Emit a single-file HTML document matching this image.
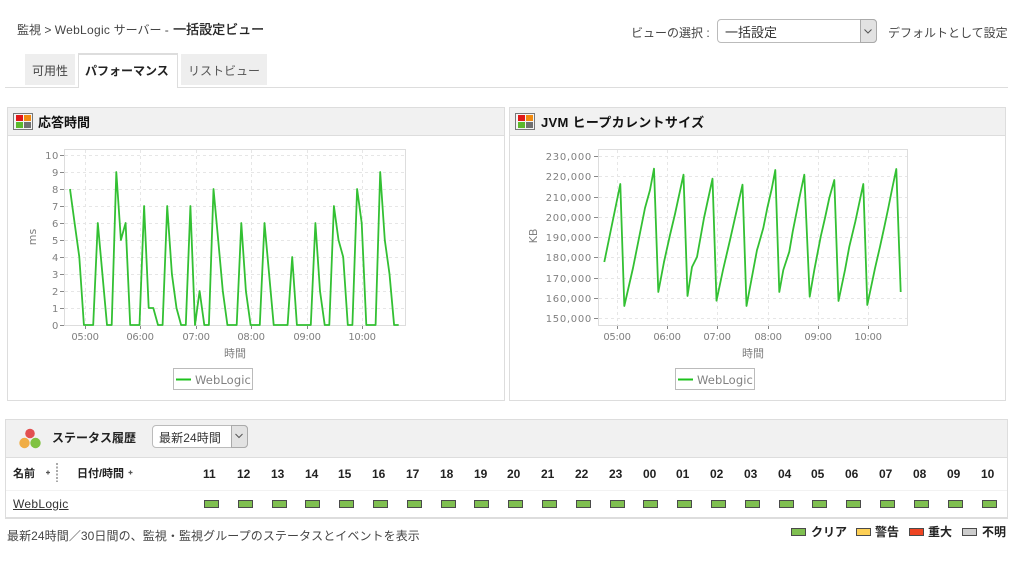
<!DOCTYPE html>
<html lang="ja"><head><meta charset="utf-8"><title>一括設定ビュー</title>
<style>
html,body{margin:0;padding:0;background:#fff}
#p{position:relative;width:1017px;height:567px;overflow:hidden;background:#fff;font:12px "Liberation Sans","Noto Sans CJK JP",sans-serif;color:#333}
.a{position:absolute;white-space:nowrap;line-height:16px}
.b{font-weight:bold;color:#222}
.box{position:absolute;box-sizing:border-box}
svg{position:absolute;left:0;top:0}
svg text{font-family:"DejaVu Sans","Noto Sans CJK JP",sans-serif;fill:#808080}
</style></head><body><div id="p">

<div class="a" style="left:17px;top:22px;color:#444">監視 &gt; <span style="letter-spacing:.3px">WebLogic</span> サーバー - <span style="color:#222;font-size:13px;margin-left:1px;-webkit-text-stroke:.3px #222">一括設定ビュー</span></div>
<div class="a" style="left:631px;top:25px;color:#444">ビューの選択 :</div>
<div class="box" style="left:717px;top:19px;width:160px;height:24px;border:1px solid #bbb;border-radius:4px;background:#fff"></div>
<div class="box" style="left:860px;top:19px;width:17px;height:24px;border:1px solid #aaa;border-radius:0 4px 4px 0;background:#e2e2e2"></div>
<div class="a" style="left:725px;top:25px;font-size:13px;color:#333">一括設定</div>
<div class="a" style="left:888px;top:25px;color:#444">デフォルトとして設定</div>

<div class="box" style="left:5px;top:87px;width:1003px;height:1px;background:#ddd"></div>
<div class="box" style="left:25px;top:54px;width:50px;height:31px;background:#eee"></div>
<div class="a" style="left:32px;top:63px;color:#444">可用性</div>
<div class="box" style="left:78px;top:53px;width:100px;height:35px;background:#fff;border:1px solid #ddd;border-top:2px solid #ddd;border-bottom:0"></div>
<div class="a b" style="left:85px;top:63px;font-size:12px">パフォーマンス</div>
<div class="box" style="left:181px;top:54px;width:86px;height:31px;background:#eee"></div>
<div class="a" style="left:188px;top:63px;font-size:12px;color:#555">リストビュー</div>

<div class="box" style="left:7px;top:107px;width:498px;height:294px;border:1px solid #ddd;background:#fff"></div>
<div class="box" style="left:7px;top:107px;width:498px;height:29px;border:1px solid #ddd;background:#f1f1f1"></div>
<div class="a b" style="left:38px;top:115px;font-size:13px;color:#111">応答時間</div>
<div class="box" style="left:509px;top:107px;width:497px;height:294px;border:1px solid #ddd;background:#fff"></div>
<div class="box" style="left:509px;top:107px;width:497px;height:29px;border:1px solid #ddd;background:#f1f1f1"></div>
<div class="a b" style="left:541px;top:115px;font-size:13px;color:#111;letter-spacing:.3px">JVM ヒープカレントサイズ</div>

<div class="box" style="left:5px;top:419px;width:1003px;height:100px;border:1px solid #ddd;border-bottom:2px solid #ddd;background:#fff"></div>
<div class="box" style="left:5px;top:419px;width:1003px;height:39px;border:1px solid #ddd;background:#f1f1f1"></div>
<div class="box" style="left:6px;top:490px;width:1001px;height:1px;background:#f2f2f2"></div>
<div class="a b" style="left:52px;top:430px;font-size:12px;color:#222">ステータス履歴</div>
<div class="box" style="left:152px;top:425px;width:96px;height:23px;border:1px solid #bbb;border-radius:4px;background:#fff"></div>
<div class="box" style="left:231px;top:425px;width:17px;height:23px;border:1px solid #aaa;border-radius:0 4px 4px 0;background:#e2e2e2"></div>
<div class="a" style="left:159px;top:430px;color:#333;letter-spacing:.1px">最新24時間</div>

<div class="a b" style="left:13px;top:466px;font-size:11px">名前</div>
<div class="a b" style="left:77px;top:466px;font-size:11px">日付/時間</div>
<div class="a" style="left:13px;top:496px;color:#333;text-decoration:underline;letter-spacing:.3px">WebLogic</div>
<div class="a" style="left:7px;top:528px;color:#444;letter-spacing:.08px">最新24時間／30日間の、監視・監視グループのステータスとイベントを表示</div>
<div class="a b" style="left:811px;top:524px">クリア</div>
<div class="a b" style="left:875px;top:524px">警告</div>
<div class="a b" style="left:928px;top:524px">重大</div>
<div class="a b" style="left:982px;top:524px">不明</div>

<div class="a b" style="left:203px;top:466px">11</div>
<div class="a b" style="left:237px;top:466px">12</div>
<div class="a b" style="left:271px;top:466px">13</div>
<div class="a b" style="left:305px;top:466px">14</div>
<div class="a b" style="left:338px;top:466px">15</div>
<div class="a b" style="left:372px;top:466px">16</div>
<div class="a b" style="left:406px;top:466px">17</div>
<div class="a b" style="left:440px;top:466px">18</div>
<div class="a b" style="left:474px;top:466px">19</div>
<div class="a b" style="left:507px;top:466px">20</div>
<div class="a b" style="left:541px;top:466px">21</div>
<div class="a b" style="left:575px;top:466px">22</div>
<div class="a b" style="left:609px;top:466px">23</div>
<div class="a b" style="left:643px;top:466px">00</div>
<div class="a b" style="left:676px;top:466px">01</div>
<div class="a b" style="left:710px;top:466px">02</div>
<div class="a b" style="left:744px;top:466px">03</div>
<div class="a b" style="left:778px;top:466px">04</div>
<div class="a b" style="left:811px;top:466px">05</div>
<div class="a b" style="left:845px;top:466px">06</div>
<div class="a b" style="left:879px;top:466px">07</div>
<div class="a b" style="left:913px;top:466px">08</div>
<div class="a b" style="left:947px;top:466px">09</div>
<div class="a b" style="left:981px;top:466px">10</div>

<svg width="1017" height="567" viewBox="0 0 1017 567">
<!-- select chevrons -->
<path d="M864.5 29.5l3.5 3.5 3.5-3.5" fill="none" stroke="#555" stroke-width="1"/>
<path d="M235.5 434l3.5 3.5 3.5-3.5" fill="none" stroke="#555" stroke-width="1"/>
<!-- panel icons -->
<g><rect x="13.5" y="113.5" width="19" height="16" fill="#f4f4f4" stroke="#777"/><rect x="16" y="115" width="7" height="6" fill="#e01818"/><rect x="24" y="115" width="7" height="6" fill="#f08a10"/><rect x="16" y="122" width="7" height="6" fill="#5cb82c"/><rect x="24" y="122" width="7" height="6" fill="#707070"/></g>
<g transform="translate(502 0)"><rect x="13.5" y="113.5" width="19" height="16" fill="#f4f4f4" stroke="#777"/><rect x="16" y="115" width="7" height="6" fill="#e01818"/><rect x="24" y="115" width="7" height="6" fill="#f08a10"/><rect x="16" y="122" width="7" height="6" fill="#5cb82c"/><rect x="24" y="122" width="7" height="6" fill="#707070"/></g>
<!-- status circles -->
<circle cx="30" cy="433.5" r="4.8" fill="#e25050"/><circle cx="24.5" cy="443" r="5.2" fill="#f0ad45"/><circle cx="35.5" cy="443" r="5.2" fill="#7fc241"/>
<!-- sort marks -->
<path d="M46 472.5h4M48 470.5v4" stroke="#555" stroke-width="1.2"/>
<path d="M128.500 472.500h4M130.500 470.500v4" stroke="#555" stroke-width="1.200"/>
<line x1="57" y1="463" x2="57" y2="482" stroke="#aaa" stroke-width="2" stroke-dasharray="2 1.500"/>

<!-- chart 1 -->
<g stroke="#e6e6e6" stroke-dasharray="3 3" fill="none">
<path d="M65 155.500H405M65 172.500H405M65 189.500H405M65 206.500H405M65 223.500H405M65 240.500H405M65 257.500H405M65 274.500H405M65 291.500H405M65 308.500H405"/>
<path d="M85.500 150V325M140.500 150V325M196.500 150V325M251.500 150V325M307.500 150V325M362.500 150V325"/>
</g>
<rect x="64.500" y="149.500" width="341" height="176" fill="none" stroke="#ddd"/>
<path d="M60 155.500h4M60 172.500h4M60 189.500h4M60 206.500h4M60 223.500h4M60 240.500h4M60 257.500h4M60 274.500h4M60 291.500h4M60 308.500h4M60 325.500h4M85.500 326v3M140.500 326v3M196.500 326v3M251.500 326v3M307.500 326v3M362.500 326v3" stroke="#888" fill="none"/>
<polyline fill="none" stroke="#33c033" stroke-width="1.800" stroke-linejoin="round" points="70,189 74.600,223 79.300,257 83.900,325 88.500,325 93.200,325 97.800,223 102.400,274 107,325 111.700,325 116.300,172 120.900,240 125.600,223 130.200,325 134.800,325 139.500,325 144.100,206 148.700,308 153.300,308 158,325 162.600,325 167.200,206 171.900,274 176.500,308 181.100,325 185.800,325 190.400,206 195,325 199.600,291 204.300,325 208.900,325 213.500,189 218.200,240 222.800,291 227.400,325 232.100,325 236.700,325 241.300,223 245.900,291 250.600,325 255.200,325 259.800,325 264.500,223 269.100,274 273.700,325 278.400,325 283,325 287.600,325 292.200,257 296.900,325 301.500,325 306.100,325 310.800,325 315.400,223 320,291 324.700,325 329.300,325 333.900,206 338.500,240 343.200,257 347.800,325 352.400,325 357.100,189 361.700,223 366.300,325 371,325 375.600,325 380.200,172 384.800,240 389.500,274 394.100,325 398.700,325"/>
<g font-size="10" text-anchor="end" letter-spacing=".6">
<text x="59" y="159">10</text><text x="59" y="176">9</text><text x="59" y="193">8</text><text x="59" y="210">7</text><text x="59" y="227">6</text><text x="59" y="244">5</text><text x="59" y="261">4</text><text x="59" y="278">3</text><text x="59" y="295">2</text><text x="59" y="312">1</text><text x="59" y="329">0</text>
</g>
<g font-size="10" text-anchor="middle" letter-spacing="-.3">
<text x="85" y="340">05:00</text><text x="140" y="340">06:00</text><text x="196" y="340">07:00</text><text x="251" y="340">08:00</text><text x="307" y="340">09:00</text><text x="362" y="340">10:00</text>
</g>
<text x="235" y="357" font-size="11" text-anchor="middle">時間</text>
<text transform="translate(36 237) rotate(-90)" font-size="11" text-anchor="middle">ms</text>
<rect x="173.500" y="368.500" width="79" height="21" fill="#fff" stroke="#bbb"/>
<line x1="176" y1="379.500" x2="191" y2="379.500" stroke="#1cc21c" stroke-width="2"/>
<text x="195" y="384" font-size="11.500" letter-spacing=".1">WebLogic</text>

<!-- chart 2 -->
<g stroke="#e6e6e6" stroke-dasharray="3 3" fill="none">
<path d="M599 156.500H907M599 176.500H907M599 197.500H907M599 217.500H907M599 237.500H907M599 257.500H907M599 278.500H907M599 298.500H907M599 318.500H907"/>
<path d="M617.500 150V325M667.500 150V325M717.500 150V325M768.500 150V325M818.500 150V325M868.500 150V325"/>
</g>
<rect x="598.500" y="149.500" width="309" height="176" fill="none" stroke="#ddd"/>
<path d="M594 156.500h4M594 176.500h4M594 197.500h4M594 217.500h4M594 237.500h4M594 257.500h4M594 278.500h4M594 298.500h4M594 318.500h4M617.500 326v3M667.500 326v3M717.500 326v3M768.500 326v3M818.500 326v3M868.500 326v3" stroke="#888" fill="none"/>
<polyline fill="none" stroke="#33c033" stroke-width="1.800" stroke-linejoin="round" points="604.300,262 620.300,184 624.300,306 633,268 645,208 650,190 654,168.700 658.300,292 664,262 670,235 675,214 683.500,174.700 687.500,296 692,267 697,257 704,218 712.500,178.700 716.500,300.700 723,270 730,240 742.500,184.700 746.500,306 757,250 758,246.700 763.300,228 767.300,208 771.700,189 775.300,170 779.300,292 783.300,270 789.300,251.700 792.700,231.700 800,195 804.300,174.700 809.700,296.700 814.300,270 820.700,236.700 825,218 829.300,198 834.300,180 838.500,301 845,270 849.300,246.700 855.300,221.700 863.300,184 867.300,305 875,268.300 880,246.700 884.300,227 888.300,208 892.300,188 896.300,169 900.700,292"/>
<g font-size="10" text-anchor="end" letter-spacing=".7">
<text x="592" y="160">230,000</text><text x="592" y="180">220,000</text><text x="592" y="201">210,000</text><text x="592" y="221">200,000</text><text x="592" y="241">190,000</text><text x="592" y="261">180,000</text><text x="592" y="282">170,000</text><text x="592" y="302">160,000</text><text x="592" y="322">150,000</text>
</g>
<g font-size="10" text-anchor="middle" letter-spacing="-.3">
<text x="617" y="340">05:00</text><text x="667" y="340">06:00</text><text x="717" y="340">07:00</text><text x="768" y="340">08:00</text><text x="818" y="340">09:00</text><text x="868" y="340">10:00</text>
</g>
<text x="753" y="357" font-size="11" text-anchor="middle">時間</text>
<text transform="translate(537 236) rotate(-90)" font-size="11" text-anchor="middle">KB</text>
<rect x="675.500" y="368.500" width="79" height="21" fill="#fff" stroke="#bbb"/>
<line x1="678" y1="379.500" x2="693" y2="379.500" stroke="#1cc21c" stroke-width="2"/>
<text x="697" y="384" font-size="11.500" letter-spacing=".1">WebLogic</text>

<!-- status bars -->
<g fill="#7fbf50" stroke="#4a4a4a">
<rect x="204.500" y="500.500" width="14" height="7"/><rect x="238.500" y="500.500" width="14" height="7"/><rect x="272.500" y="500.500" width="14" height="7"/><rect x="305.500" y="500.500" width="14" height="7"/><rect x="339.500" y="500.500" width="14" height="7"/><rect x="373.500" y="500.500" width="14" height="7"/><rect x="407.500" y="500.500" width="14" height="7"/><rect x="441.500" y="500.500" width="14" height="7"/><rect x="474.500" y="500.500" width="14" height="7"/><rect x="508.500" y="500.500" width="14" height="7"/><rect x="542.500" y="500.500" width="14" height="7"/><rect x="576.500" y="500.500" width="14" height="7"/><rect x="610.500" y="500.500" width="14" height="7"/><rect x="643.500" y="500.500" width="14" height="7"/><rect x="677.500" y="500.500" width="14" height="7"/><rect x="711.500" y="500.500" width="14" height="7"/><rect x="745.500" y="500.500" width="14" height="7"/><rect x="779.500" y="500.500" width="14" height="7"/><rect x="812.500" y="500.500" width="14" height="7"/><rect x="846.500" y="500.500" width="14" height="7"/><rect x="880.500" y="500.500" width="14" height="7"/><rect x="914.500" y="500.500" width="14" height="7"/><rect x="948.500" y="500.500" width="14" height="7"/><rect x="982.500" y="500.500" width="14" height="7"/>
<rect x="791.500" y="528.500" width="14" height="7"/>
<rect x="856.500" y="528.500" width="14" height="7" fill="#fdcf55"/>
<rect x="909.500" y="528.500" width="14" height="7" fill="#ee4422"/>
<rect x="962.500" y="528.500" width="14" height="7" fill="#cccccc"/>
</g>
</svg>
</div></body></html>
